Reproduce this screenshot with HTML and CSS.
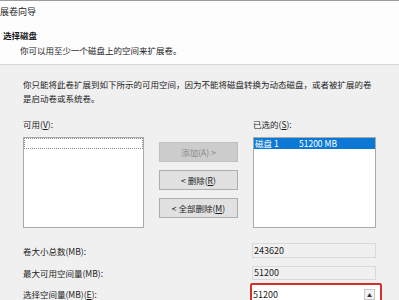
FILE: index.html
```html
<!DOCTYPE html>
<html lang="zh-CN">
<head>
<meta charset="utf-8">
<title>扩展卷向导</title>
<link rel="stylesheet" href="styles.css">
</head>
<body>
<div class="window">
  <div class="header">
    <div class="title">扩展卷向导</div>
    <div class="subtitle">选择磁盘</div>
    <div class="desc">你可以用至少一个磁盘上的空间来扩展卷。</div>
  </div>
  <div class="content">
    <p class="para">你只能将此卷扩展到如下所示的可用空间，因为不能将磁盘转换为动态磁盘，或者被扩展的卷是启动卷或系统卷。</p>
    <div class="lists">
      <div class="col col-left">
        <div class="label">可用(<u>V</u>):</div>
        <div class="listbox">
          <div class="row focus"></div>
        </div>
      </div>
      <div class="buttons">
        <div class="btn disabled">添加(A) &gt;</div>
        <div class="btn">&lt; 删除(<u>R</u>)</div>
        <div class="btn">&lt; 全部删除(<u>M</u>)</div>
      </div>
      <div class="col col-right">
        <div class="label">已选的(<u>S</u>):</div>
        <div class="listbox">
          <div class="row selected"><span class="disk">磁盘 1</span><span>51200 MB</span></div>
        </div>
      </div>
    </div>
    <div class="field-row r1">
      <div class="flabel">卷大小总数(MB):</div>
      <div class="ro">243620</div>
    </div>
    <div class="field-row r2">
      <div class="flabel">最大可用空间量(MB):</div>
      <div class="ro">51200</div>
    </div>
    <div class="field-row r3">
      <div class="flabel">选择空间量(MB)(<u>E</u>):</div>
      <div class="spin-outline">
        <div class="spin">
          <span class="spin-val">51200</span>
          <span class="spin-btn">▲</span>
        </div>
      </div>
    </div>
  </div>
</div>
</body>
</html>
```

FILE: styles.css
```css
html, body {
  margin: 0;
  padding: 0;
}
body {
  width: 399px;
  height: 300px;
  overflow: hidden;
  background: #f0f0f0;
  font-family: "Noto Sans CJK SC", "Noto Sans", sans-serif;
  font-size: 8.5px;
  color: #1c1c1c;
}
.window {
  width: 399px;
  height: 300px;
  overflow: hidden;
}
.header {
  box-sizing: border-box;
  height: 65px;
  background: #fdfdfd;
  border-top: 1px solid #9c9c9c;
  border-bottom: 1px solid #d6d6d6;
}
.title {
  margin-left: -9px;
  padding-top: 5px;
  font-size: 9px;
  line-height: 12px;
}
.subtitle {
  margin-top: 11px;
  margin-left: 3px;
  font-weight: bold;
  line-height: 12px;
}
.desc {
  margin-top: 3px;
  margin-left: 20px;
  line-height: 12px;
}
.content {
  padding-left: 23px;
}
.para {
  margin: 12px 0 0 0;
  width: 352px;
  line-height: 14px;
}
.lists {
  display: flex;
  margin-top: 13px;
}
.label {
  line-height: 12px;
  height: 12px;
  margin-bottom: 7px;
}
.col-left .listbox {
  width: 121px;
}
.col-right .listbox {
  width: 123px;
}
.listbox {
  box-sizing: border-box;
  height: 91px;
  background: #fff;
  border: 1px solid #a9a9a9;
  padding: 0;
}
.row {
  height: 11px;
  line-height: 11px;
  box-sizing: border-box;
}
.focus {
  border: 1px dotted #8a8a8a;
}
.selected {
  background: #0a78d4;
  color: #fff;
  display: flex;
  padding-left: 1px;
}
.disk {
  width: 44px;
}
.buttons {
  display: flex;
  flex-direction: column;
  gap: 8px;
  margin: 24px 15px 0 15px;
  width: 79px;
}
.btn {
  box-sizing: border-box;
  height: 20px;
  line-height: 18px;
  text-align: center;
  background: #e1e1e1;
  border: 1px solid #adadad;
}
.btn.disabled {
  background: #cccccc;
  border-color: #bfbfbf;
  color: #8a8a8a;
}
.field-row {
  display: flex;
  align-items: center;
}
.r1 {
  margin-top: 15px;
}
.r2 {
  margin-top: 8px;
}
.r3 {
  margin-top: 3px;
}
.flabel {
  width: 229px;
  line-height: 12px;
}
.ro {
  box-sizing: border-box;
  width: 124px;
  height: 15px;
  line-height: 13px;
  padding-left: 1px;
  font-size: 9px;
  background: #f0f0f0;
  border: 1px solid #dadada;
}
.r2 .ro {
  height: 14px;
  line-height: 12px;
}
.spin-outline {
  margin-left: -2px;
  border: 2px solid #d3302a;
  border-radius: 2px;
  padding-right: 4px;
  background: #fff;
}
.spin {
  box-sizing: border-box;
  width: 124px;
  height: 18px;
  display: flex;
  align-items: center;
  justify-content: space-between;
  background: #fff;
  font-size: 9px;
  padding-left: 1px;
}
.spin-btn {
  box-sizing: border-box;
  width: 11px;
  height: 11px;
  font-size: 5px;
  line-height: 9px;
  text-align: center;
  background: #f3f3f3;
  border: 1px solid #c8c8c8;
  color: #333;
  margin-right: 1px;
}
```
